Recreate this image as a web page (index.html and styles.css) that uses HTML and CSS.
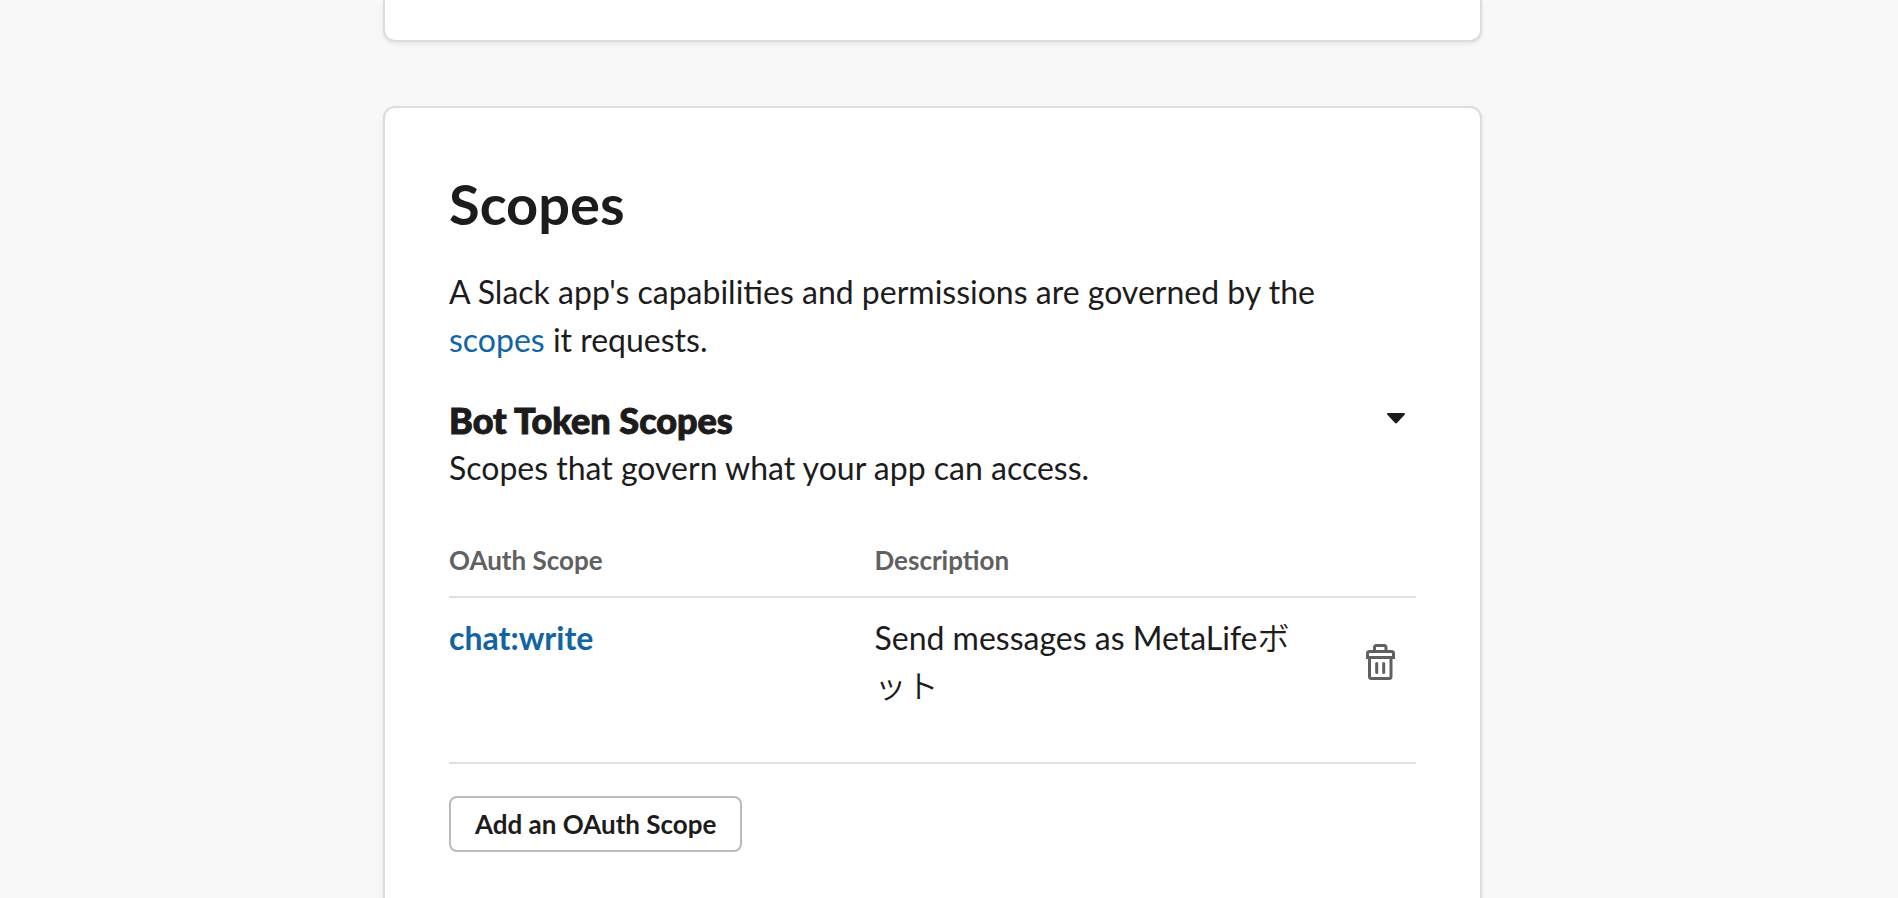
FILE: index.html
```html
<!DOCTYPE html>
<html lang="en">
<head>
    <meta charset="utf-8">
    <title>OAuth &amp; Permissions</title>
    <link rel="stylesheet" href="styles.css">
</head>
<body>
    <main class="page">
        <section class="card card-previous"></section>

        <section class="card">
            <h1>Scopes</h1>
            <p class="intro">A Slack app's capabilities and permissions are governed by the <a href="#scopes">scopes</a> it requests.</p>

            <div class="group-header">
                <div>
                    <h2>Bot Token Scopes</h2>
                    <p>Scopes that govern what your app can access.</p>
                </div>
                <button type="button" class="toggle" aria-label="Collapse Bot Token Scopes">
                    <svg width="20" height="12" viewBox="0 0 20 12"><path d="M2 1h16q1.500 0 .8 1.500L11.200 10.800q-1.200 1.200-2.400 0L1.200 2.500Q.5 1 2 1z" fill="#1d1c1d"/></svg>
                </button>
            </div>

            <table class="scopes">
                <thead>
                    <tr>
                        <th class="col-scope">OAuth Scope</th>
                        <th class="col-description">Description</th>
                        <th></th>
                    </tr>
                </thead>
                <tbody>
                    <tr>
                        <td><a class="scope-name" href="#chat-write">chat:write</a></td>
                        <td>Send messages as MetaLifeボット</td>
                        <td>
                            <button type="button" class="delete" aria-label="Delete chat:write">
                                <svg width="30" height="36" viewBox="0 0 30 36" fill="none" stroke="#616061" stroke-width="3" stroke-linecap="round"><path d="M1.500 13.500v-4q0-2 2-2h22q2 0 2 2v4z"/><path d="M8.500 7V3.500q0-2 2-2h7.500q2 0 2 2V7M3.500 14v18.500q0 2 2 2h17.500q2 0 2-2V14M10.700 19.500v9M17.700 19.500v9"/></svg>
                            </button>
                        </td>
                    </tr>
                </tbody>
            </table>

            <button type="button" class="add-scope">Add an OAuth Scope</button>
        </section>
    </main>
</body>
</html>
```
FILE: styles.css
```css
* {
    box-sizing: border-box;
}

body {
    margin: 0;
    padding-right: 33px;
    background-color: #f8f8f8;
    color: #1d1c1d;
    font-family: Lato, "Noto Sans CJK JP DemiLight", "Noto Sans CJK JP", sans-serif;
    font-size: 32px;
    line-height: 48px;
}

h1,
h2,
p {
    margin: 0;
}

a {
    color: #1264a3;
    text-decoration: none;
}

button {
    font-family: inherit;
    cursor: pointer;
}

.page {
    max-width: 1099px;
    margin: 0 auto;
}

.card {
    padding: 64px;
    background-color: #fff;
    border: 2px solid #ddd;
    border-radius: 12px;
    box-shadow: 0 2px 4px rgba(0, 0, 0, 0.08);
}

.card-previous {
    padding: 0 64px 40px;
    border-top: none;
    border-radius: 0 0 12px 12px;
    margin-bottom: 64px;
}

h1 {
    font-size: 56px;
    line-height: 64px;
    margin-bottom: 32px;
}

.intro {
    margin-bottom: 32px;
}

.group-header {
    display: flex;
    justify-content: space-between;
    align-items: flex-start;
}

h2 {
    font-size: 36px;
    font-weight: 900;
    line-height: 48px;
    -webkit-text-stroke: 1px #1d1c1d;
}

.toggle {
    display: flex;
    padding: 16px 10px;
    background: none;
    border: none;
}

.scopes {
    width: 100%;
    margin: 24px 0 32px;
    border-collapse: collapse;
    table-layout: fixed;
}

.scopes th {
    padding: 24px 0 16px;
    border-bottom: 2px solid #e0e0e0;
    color: #616061;
    font-size: 26px;
    line-height: 40px;
    text-align: left;
}

.scopes td {
    padding: 16px 0 52px;
    border-bottom: 2px solid #e0e0e0;
    vertical-align: top;
}

.scopes .col-scope,
.scopes .col-description {
    width: 44%;
}

.scope-name {
    font-weight: 700;
}

.delete {
    display: flex;
    padding: 30px 20px;
    margin-left: auto;
    background: none;
    border: none;
}

.add-scope {
    display: block;
    height: 56px;
    padding: 0 24px;
    background-color: #fff;
    border: 2px solid #bbb;
    border-radius: 8px;
    color: #1d1c1d;
    font-size: 26px;
    font-weight: 700;
}
```
